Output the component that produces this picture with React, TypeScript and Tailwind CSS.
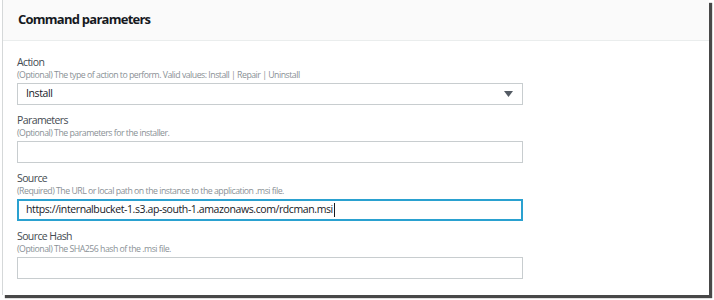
type Field = {
  label: string;
  hint: string;
  value?: string;
  select?: boolean;
  focused?: boolean;
};

const fields: Field[] = [
  {
    label: "Action",
    hint: "(Optional) The type of action to perform. Valid values: Install | Repair | Uninstall",
    value: "Install",
    select: true,
  },
  { label: "Parameters", hint: "(Optional) The parameters for the installer." },
  {
    label: "Source",
    hint: "(Required) The URL or local path on the instance to the application .msi file.",
    value: "https://internalbucket-1.s3.ap-south-1.amazonaws.com/rdcman.msi",
    focused: true,
  },
  { label: "Source Hash", hint: "(Optional) The SHA256 hash of the .msi file." },
];

function FieldRow({ field }: { field: Field }) {
  return (
    <div className="flex flex-col">
      <div className="h-[14px] text-[10.5px] leading-[14px] tracking-[-0.6px] text-[#444b52]">{field.label}</div>
      <div className="h-[12px] text-[8.75px] leading-[12px] tracking-[-0.5px] text-[#8a9196]">{field.hint}</div>
      <div
        className={`mt-[2px] w-[506px] h-[22px] flex items-center bg-white ${
          field.focused ? "border-2 border-[#2aa1d0] pl-[7px]" : "border border-[#c8cdcf] pl-[8px]"
        }`}>
        <span className="text-[10.5px] tracking-[-0.4px] text-[#16191f] whitespace-nowrap">{field.value}</span>
        {field.focused && <span className="ml-[1px] w-px h-[14px] bg-[#16191f]" />}
        {field.select && (
          <svg className="ml-auto mr-[9px]" width="9" height="6" viewBox="0 0 9 6">
            <path d="M0 0H9L4.5 6Z" fill="#545b64" />
          </svg>
        )}
      </div>
    </div>
  );
}

export default function App() {
  return (
    <div className="w-[714px] h-[300px] bg-white overflow-hidden" style={{ fontFamily: '"Open Sans", sans-serif' }}>
      <div className="ml-[2px] w-[707px] h-[295px] bg-white border-l border-[#d5d8d9] shadow-[3px_3px_1px_rgba(40,40,40,0.85)]">
        <div className="h-[41px] bg-[#fafafa] border-b border-[#eaeded] flex items-center pl-[15px]">
          <span className="text-[13px] font-bold tracking-[-0.75px] text-[#16191f]">Command parameters</span>
        </div>
        <div className="pl-[14px] pt-[14px] flex flex-col gap-[8px]">
          {fields.map((f) => (
            <FieldRow key={f.label} field={f} />
          ))}
        </div>
      </div>
    </div>
  );
}
